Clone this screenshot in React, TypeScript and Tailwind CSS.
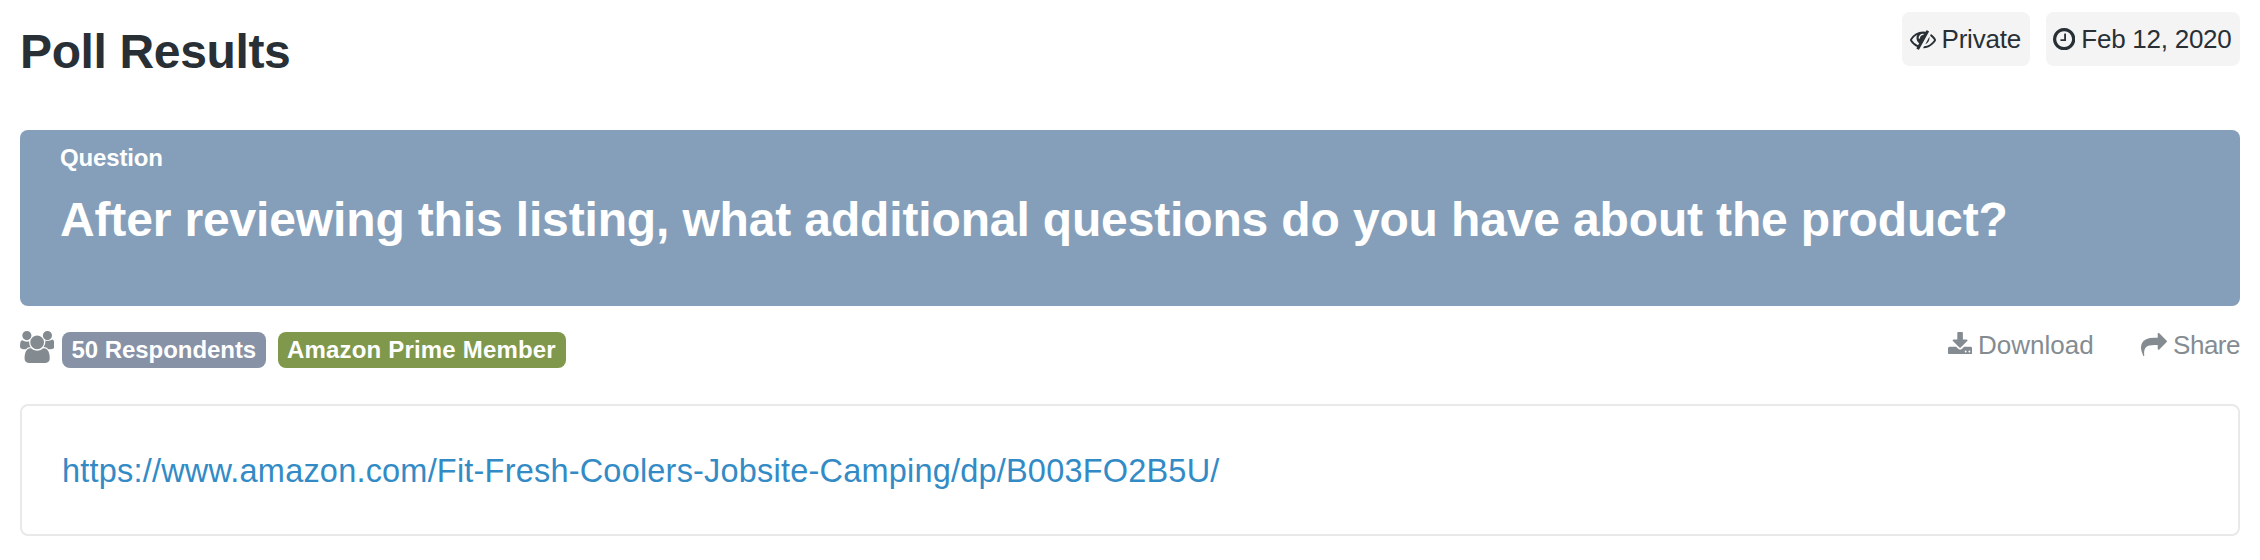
const LINK = 'https://www.amazon.com/Fit-Fresh-Coolers-Jobsite-Camping/dp/B003FO2B5U/';

const ICONS = {
  eyeSlash: {
    box: '0 0 1792 1792',
    d: 'M555 1335l78-141q-87-63-136-159t-49-203q0-121 61-225-229 117-381 353 167 258 427 375zm389-759q0-20-14-34t-34-14q-125 0-214.5 89.5t-89.5 214.5q0 20 14 34t34 14 34-14 14-34q0-86 61-147t147-61q20 0 34-14t14-34zm363-191q0 7-1 9-106 189-316 567t-315 566l-49 89q-10 16-28 16-12 0-134-70-16-10-16-28 0-12 44-87-143-65-263.5-173t-208.5-245q-20-31-20-69t20-69q153-235 380-371t496-136q89 0 180 17l54-97q10-16 28-16 5 0 18 6t31 15.5 33 18.5 31.5 18.5 19.5 11.5q16 10 16 27zm37 447q0 139-79 253.5t-209 164.5l280-502q8 45 8 84zm448 128q0 35-20 69-39 64-109 145-150 172-347.5 267t-419.5 95l74-132q212-18 392.5-137t301.500-307q-115-179-282-294l63-112q95 64 182.5 153t144.5 184q20 34 20 69z',
  },
  clock: {
    box: '128 128 1536 1536',
    d: 'M1024 544v448q0 14-9 23t-23 9h-320q-14 0-23-9t-9-23v-64q0-14 9-23t23-9h224v-352q0-14 9-23t23-9h64q14 0 23 9t9 23zm416 352q0-148-73-273t-198-198-273-73-273 73-198 198-73 273 73 273 198 198 273 73 273-73 198-198 73-273zm224 0q0 209-103 385.5t-279.5 279.5-385.5 103-385.5-103-279.5-279.5-103-385.5 103-385.5 279.5-279.5 385.5-103 385.5 103 279.5 279.5 103 385.5z',
  },
  users: {
    box: '0 0 1920 1792',
    d: 'M593 896q-162 5-265 128h-134q-82 0-138-40.5t-56-118.5q0-353 124-353 6 0 43.5 21t97.5 42.5 119 21.5q67 0 133-23-5 37-5 66 0 159 93 296zm1071 637q0 120-73 189.5t-194 69.5h-874q-121 0-194-69.5t-73-189.5q0-53 3.5-103.5t14-109 26.5-108.5 43-97.5 62-81 85.5-53.5 111.5-20q10 0 43 21.5t73 48 107 48 135 21.5 135-21.5 107-48 73-48 43-21.5q61 0 111.5 20t85.5 53.5 62 81 43 97.5 26.5 108.5 14 109 3.5 103.5zm-1024-1277q0 106-75 181t-181 75-181-75-75-181 75-181 181-75 181 75 75 181zm704 384q0 159-112.5 271.5t-271.5 112.5-271.5-112.5-112.5-271.5 112.5-271.5 271.5-112.5 271.5 112.5 112.5 271.500zm576 225q0 78-56 118.5t-138 40.5h-134q-103-123-265-128 93-137 93-296 0-29-5-66 66 23 133 23 59 0 119-21.5t97.5-42.5 43.5-21q124 0 124 353zm-128-609q0 106-75 181t-181 75-181-75-75-181 75-181 181-75 181 75 75 181z',
  },
  download: {
    box: '64 0 1664 1536',
    d: 'M1344 1344q0-26-19-45t-45-19-45 19-19 45 19 45 45 19 45-19 19-45zm256 0q0-26-19-45t-45-19-45 19-19 45 19 45 45 19 45-19 19-45zm128-224v320q0 40-28 68t-68 28h-1472q-40 0-68-28t-28-68v-320q0-40 28-68t68-28h465l135 136q58 56 136 56t136-56l136-136h464q40 0 68 28t28 68zm-325-569q17 41-14 70l-448 448q-18 19-45 19t-45-19l-448-448q-31-29-14-70 17-39 59-39h256v-448q0-26 19-45t45-19h256q26 0 45 19t19 45v448h256q42 0 59 39z',
  },
  share: {
    box: '0 64 1792 1600',
    d: 'M1792 640q0 26-19 45l-512 512q-19 19-45 19t-45-19-19-45v-256h-224q-98 0-175.5 6t-154 21.5-133 42.5-105.5 69.5-80 101-48.5 138.5-17.5 181q0 55 5 123 0 6 2.5 23.5t2.5 26.5q0 15-8.5 25t-23.5 10q-16 0-28-17-7-9-13-22t-13.5-30-10.5-24q-127-285-127-451 0-199 53-333 162-403 875-403h224v-256q0-26 19-45t45-19 45 19l512 512q19 19 19 45z',
  },
};

function Icon({ name, className }: { name: keyof typeof ICONS; className: string }) {
  return (
    <svg viewBox={ICONS[name].box} fill="currentColor" className={`shrink-0 ${className}`}>
      <path d={ICONS[name].d} />
    </svg>
  );
}

export default function App() {
  return (
    <main className="h-[560px] bg-white px-5 pt-3 font-['Liberation_Sans',Arial,sans-serif] text-[#283036]">
      <header className="flex h-[118px] items-start justify-between">
        <h1 className="pt-3 text-[48px] leading-[55px] font-bold tracking-[-0.36px] whitespace-nowrap">Poll Results</h1>
        <div className="flex gap-4 text-[26px]">
          <span className="flex h-[54px] w-32 items-center gap-[5.5px] rounded-lg bg-[#f4f4f4] pl-2">
            <Icon name="eyeSlash" className="size-[26px]" />
            <span className="tracking-[-0.2px] whitespace-nowrap">Private</span>
          </span>
          <span className="flex h-[54px] w-[194px] items-center gap-[6px] rounded-lg bg-[#f4f4f4] pl-[7px]">
            <Icon name="clock" className="size-[22.3px]" />
            <span className="tracking-[-0.25px] whitespace-nowrap">Feb 12, 2020</span>
          </span>
        </div>
      </header>

      <section className="h-44 rounded-lg bg-[#859fba] px-10 pt-[14px] font-bold text-white">
        <p className="text-2xl leading-7 tracking-[-0.15px]">Question</p>
        <h2 className="mt-5 text-[48px] leading-[55px] tracking-[-0.145px] whitespace-nowrap">
          After reviewing this listing, what additional questions do you have about the product?
        </h2>
      </section>

      <div className="flex h-[98px] items-start justify-between pt-6">
        <div className="flex items-start text-2xl font-bold text-white">
          <Icon name="users" className="mt-px mr-[7.7px] h-8 w-[34.3px] text-[#838b91]" />
          <span className="mt-0.5 mr-3 h-9 w-[204px] rounded-lg bg-[#8792a6] pl-[9.5px] leading-9 tracking-[-0.05px] whitespace-nowrap">50 Respondents</span>
          <span className="mt-0.5 h-9 w-72 rounded-lg bg-[#7f984c] pl-[9px] leading-9 tracking-[0.18px] whitespace-nowrap">Amazon Prime Member</span>
        </div>
        <div className="flex items-start gap-[47px] text-[26px] leading-[30px] text-[#848c92]">
          <a className="flex items-start gap-[5.5px]">
            <Icon name="download" className="mt-0.5 h-[22.3px] w-[24.2px]" />
            <span>Download</span>
          </a>
          <a className="flex items-start gap-[6.5px]">
            <Icon name="share" className="mt-[3px] h-[23.2px] w-[26px]" />
            <span className="tracking-[-0.5px]">Share</span>
          </a>
        </div>
      </div>

      <section className="flex h-[132px] items-center rounded-lg border-2 border-[#e9e9e9] pt-0.5 pl-10 text-[32.5px]">
        <a className="tracking-[0.2px] whitespace-nowrap text-[#338bc6]">{LINK}</a>
      </section>
    </main>
  );
}
